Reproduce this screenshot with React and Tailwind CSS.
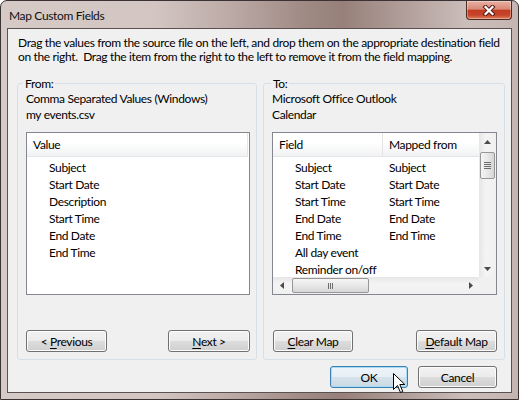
import React from "react";

// Windows 7 style "Map Custom Fields" dialog

const Btn = ({ children, w, primary, className = "" }) => (
  <button
    className={`flex h-[22px] items-center justify-center rounded-[3px] border text-[12px] leading-[15px] text-black ${w} ${
      primary
        ? "border-[#3c7fb1] bg-[linear-gradient(#eef5fa_0%,#e6eff6_50%,#d7e3ec_50%,#cbd9e4_100%)] shadow-[inset_0_0_0_1px_#a6dcf6]"
        : "border-[#707070] bg-[linear-gradient(#f2f2f2_0%,#ebebeb_50%,#dddddd_50%,#cfcfcf_100%)] shadow-[inset_0_0_0_1px_#fcfcfc]"
    } ${className}`}
  >
    <span className="whitespace-pre">{children}</span>
  </button>
);

const Key = ({ children }) => (
  <span className="underline underline-offset-[2px]">{children}</span>
);

const Arrow = ({ dir }) => {
  const pts = {
    up: "0,4 3.5,0 7,4",
    down: "0,0 3.5,4 7,0",
    left: "4,0 0,3.5 4,7",
    right: "0,0 4,3.5 0,7",
  }[dir];
  const vertical = dir === "up" || dir === "down";
  return (
    <svg
      width={vertical ? 7 : 4}
      height={vertical ? 4 : 7}
      viewBox={vertical ? "0 0 7 4" : "0 0 4 7"}
    >
      <polygon points={pts} fill="#4a4a4a" />
    </svg>
  );
};

const CloseButton = () => (
  <div className="mr-[6px] flex h-[19px] w-[46px] items-center justify-center rounded-b-[4px] border border-t-0 border-[#4e2a24] bg-[linear-gradient(#e8b0a4_0%,#d98976_45%,#c23c22_52%,#c5452b_78%,#df7d58_100%)] shadow-[inset_0_0_0_1px_rgba(255,255,255,0.35)]">
    <svg width="14" height="11" viewBox="0 0 14 11">
      <path
        d="M3.5 2 L10.5 9 M10.5 2 L3.5 9"
        stroke="#5a1e16"
        strokeWidth="4.2"
        strokeLinecap="square"
      />
      <path
        d="M3.5 2 L10.5 9 M10.5 2 L3.5 9"
        stroke="#ffffff"
        strokeWidth="2.2"
        strokeLinecap="square"
      />
    </svg>
  </div>
);

const Cursor = () => (
  <svg
    className="absolute left-[392px] top-[372px]"
    width="13"
    height="21"
    viewBox="0 0 13 21"
  >
    <path
      d="M0.5 0.5 L0.5 16.5 L4.5 12.5 L7.5 19.5 L9.8 18.5 L6.8 11.5 L11.8 11.5 Z"
      fill="#ffffff"
      stroke="#000000"
      strokeWidth="1"
      strokeLinejoin="miter"
    />
  </svg>
);

const leftItems = [
  "Subject",
  "Start Date",
  "Description",
  "Start Time",
  "End Date",
  "End Time",
];

const rightItems = [
  ["Subject", "Subject"],
  ["Start Date", "Start Date"],
  ["Start Time", "Start Time"],
  ["End Date", "End Date"],
  ["End Time", "End Time"],
  ["All day event", ""],
  ["Reminder on/off", ""],
];

const headerCls =
  "flex h-[24px] shrink-0 items-center border-b border-[#e5e5e5] bg-[linear-gradient(#ffffff_0%,#ffffff_40%,#f1f2f4_100%)]";

const LeftList = () => (
  <div className="mt-[9px] flex h-[163px] w-[224px] flex-col border border-[#828790] bg-white">
    <div className={`${headerCls} mr-[1px] border-r pl-[6px]`}>Value</div>
    <div className="pt-[2px]">
      {leftItems.map((item) => (
        <div key={item} className="h-[17px] pl-[22px] leading-[17px]">
          {item}
        </div>
      ))}
    </div>
  </div>
);

const RightList = () => (
  <div className="mt-[9px] flex h-[163px] w-[225px] flex-col border border-[#828790] bg-white">
    <div className="flex min-h-0 flex-1">
      <div className="flex min-w-0 flex-1 flex-col overflow-hidden">
        <div className={headerCls}>
          <div className="flex h-full w-[110px] items-center border-r border-[#e5e5e5] pl-[6px]">
            Field
          </div>
          <div className="pl-[6px]">Mapped from</div>
        </div>
        <div className="pt-[2px]">
          {rightItems.map(([field, mapped]) => (
            <div key={field} className="flex h-[17px] leading-[17px]">
              <div className="w-[110px] shrink-0 pl-[22px]">{field}</div>
              <div className="pl-[6px]">{mapped}</div>
            </div>
          ))}
        </div>
      </div>
      {/* vertical scrollbar */}
      <div className="flex w-[17px] shrink-0 flex-col bg-[linear-gradient(90deg,#e6e6e6,#f4f4f4_40%,#f0f0f0)]">
        <div className="flex h-[17px] items-center justify-center">
          <Arrow dir="up" />
        </div>
        <div className="mx-[1px] mt-[2px] flex h-[27px] flex-col items-center justify-center gap-[1px] rounded-[2px] border border-[#979797] bg-[linear-gradient(90deg,#f5f5f5_0%,#e8e8e8_50%,#d6d6d6_100%)]">
          <div className="h-px w-[7px] bg-[#6e6e6e]" />
          <div className="h-px w-[7px] bg-[#6e6e6e]" />
          <div className="h-px w-[7px] bg-[#6e6e6e]" />
          <div className="h-px w-[7px] bg-[#6e6e6e]" />
        </div>
        <div className="flex-1" />
        <div className="flex h-[17px] items-center justify-center">
          <Arrow dir="down" />
        </div>
      </div>
    </div>
    {/* horizontal scrollbar */}
    <div className="flex h-[17px] shrink-0">
      <div className="flex flex-1 items-center bg-[linear-gradient(#e6e6e6,#f4f4f4_40%,#f0f0f0)]">
        <div className="flex h-[17px] w-[17px] items-center justify-center">
          <Arrow dir="left" />
        </div>
        <div className="ml-[2px] flex h-[15px] w-[77px] items-center justify-center gap-[1px] rounded-[2px] border border-[#979797] bg-[linear-gradient(#f5f5f5_0%,#e8e8e8_50%,#d6d6d6_100%)]">
          <div className="h-[6px] w-px bg-[#6e6e6e]" />
          <div className="h-[6px] w-px bg-[#6e6e6e]" />
          <div className="h-[6px] w-px bg-[#6e6e6e]" />
        </div>
        <div className="flex-1" />
        <div className="flex h-[17px] w-[17px] items-center justify-center">
          <Arrow dir="right" />
        </div>
      </div>
      <div className="w-[17px] bg-[#f0f0f0]" />
    </div>
  </div>
);

export default function App() {
  return (
    <div className="relative flex h-[400px] w-[519px] flex-col overflow-hidden rounded-t-[7px] border border-[#3b3333] bg-[linear-gradient(90deg,#d6cac7_0%,#d2c5c2_30%,#bba9a5_45%,#a18b86_58%,#978079_66%,#b19e9a_78%,#cbbdba_90%,#c4b5b2_100%)] font-['Lato',sans-serif] text-[12px] tracking-[-0.35px] text-black">
      <div className="flex h-[27px] shrink-0 items-start">
        <div className="flex-1 pl-[8px] pt-[7px] leading-[15px] text-[#111]">
          Map Custom Fields
        </div>
        <CloseButton />
      </div>

      <div className="mx-[6px] mb-[6px] flex flex-1 flex-col border border-[#5b5151] bg-[#f0f0f0]">
        <p className="whitespace-nowrap px-[10px] pt-[7px] leading-[14px]">
          Drag the values from the source file on the left, and drop them on
          the appropriate destination field
          <br />
          on the right.{"\u00a0"} Drag the item from the right to the left to
          remove it from the field mapping.
        </p>

        <div className="mt-[12px] flex gap-[6px] pl-[9px] pr-[6px]">
          <fieldset className="w-[240px] rounded-[3px] border border-[#d5dfe5]">
            <legend className="ml-[5px] px-[2px] leading-[15px]">From:</legend>
            <div className="pb-[7px] pl-[8px] leading-[16px]">
              <div>Comma Separated Values (Windows)</div>
              <div>my events.csv</div>
              <LeftList />
              <div className="mt-[35px] flex w-[224px] justify-between">
                <Btn w="w-[81px]">
                  {"< "}
                  <Key>P</Key>
                  {"revious"}
                </Btn>
                <Btn w="w-[82px]">
                  <Key>N</Key>
                  {"ext >"}
                </Btn>
              </div>
            </div>
          </fieldset>

          <fieldset className="w-[242px] rounded-[3px] border border-[#d5dfe5]">
            <legend className="ml-[7px] px-[2px] leading-[15px]">To:</legend>
            <div className="pb-[7px] pl-[8px] leading-[16px]">
              <div>Microsoft Office Outlook</div>
              <div>Calendar</div>
              <RightList />
              <div className="mt-[35px] flex w-[225px] justify-between">
                <Btn w="w-[80px]" className="ml-[1px]">
                  <Key>C</Key>
                  {"lear Map"}
                </Btn>
                <Btn w="w-[81px]">
                  <Key>D</Key>
                  {"efault Map"}
                </Btn>
              </div>
            </div>
          </fieldset>
        </div>

        <div className="mt-[6px] flex justify-end gap-[10px] pr-[14px]">
          <Btn w="w-[78px]" primary>
            OK
          </Btn>
          <Btn w="w-[79px]">Cancel</Btn>
        </div>
      </div>

      <Cursor />
    </div>
  );
}
